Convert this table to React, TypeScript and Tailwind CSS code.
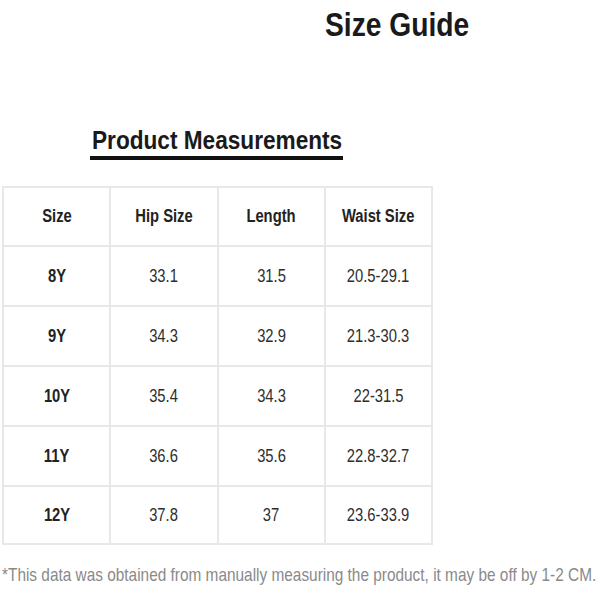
const rows = [
  ["8Y", "33.1", "31.5", "20.5-29.1"],
  ["9Y", "34.3", "32.9", "21.3-30.3"],
  ["10Y", "35.4", "34.3", "22-31.5"],
  ["11Y", "36.6", "35.6", "22.8-32.7"],
  ["12Y", "37.8", "37", "23.6-33.9"],
];

// no narrow face installed, so Liberation Sans gets squeezed with scale-x
const sans = "font-['Liberation_Sans',Arial,sans-serif]";

function Cell({ children, bold }: { children: string; bold?: boolean }) {
  return (
    <span
      className={`inline-block scale-x-[0.82] origin-center whitespace-nowrap ${bold ? "font-bold text-[#222]" : "font-normal text-[#2e2e2e]"}`}
    >
      {children}
    </span>
  );
}

export default function App() {
  return (
    <div className={`w-[600px] h-[600px] bg-white overflow-hidden ${sans}`}>
      {/* title */}
      <h1 className="ml-[325px] mt-[7px] scale-x-[0.83] origin-left whitespace-nowrap text-[34px] leading-[34px] font-bold text-[#1a1a1a]">
        Size Guide
      </h1>

      {/* section heading */}
      <div className="ml-[90px] mt-[87px] w-[253px] border-b-4 border-[#111] pb-[3px] pl-[2px]">
        <h2 className="scale-x-[0.905] origin-left whitespace-nowrap text-[25px] leading-[25px] font-bold text-[#1a1a1a]">
          Product Measurements
        </h2>
      </div>

      {/* table */}
      <div className="pl-[2px] mt-[26px]">
        <table className="w-[431px] table-fixed border-collapse border-2 border-[#e8e8e8] text-[18px]">
          <thead>
            <tr className="h-[59px]">
              {["Size", "Hip Size", "Length", "Waist Size"].map((h) => (
                <th key={h} className="border-2 border-[#e8e8e8] text-center">
                  <Cell bold>{h}</Cell>
                </th>
              ))}
            </tr>
          </thead>
          <tbody>
            {rows.map((r) => (
              <tr key={r[0]} className="h-[60px] last:h-[58px]">
                {r.map((c, i) => (
                  <td key={i} className="border-2 border-[#e8e8e8] text-center">
                    <Cell bold={i === 0}>{c}</Cell>
                  </td>
                ))}
              </tr>
            ))}
          </tbody>
        </table>
      </div>

      {/* note */}
      <p className="ml-[2px] mt-[20px] scale-x-[0.81] origin-left whitespace-nowrap text-[19px] leading-[19px] text-[#8a8a8a]">
        *This data was obtained from manually measuring the product, it may be off by 1-2 CM.
      </p>
    </div>
  );
}
